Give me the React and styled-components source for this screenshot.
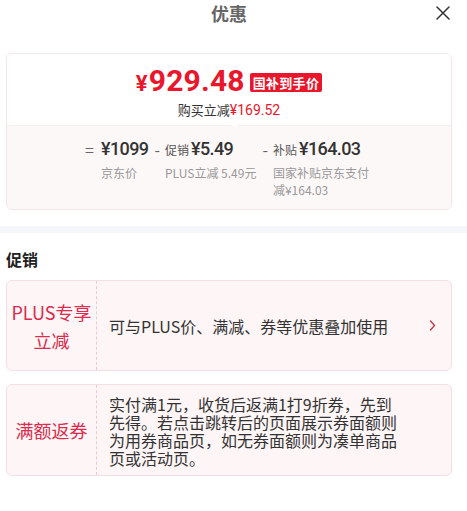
import React from "react";
import styled, { createGlobalStyle } from "styled-components";

const RED = "#e9162c";

const GlobalStyle = createGlobalStyle`
  html, body { margin: 0; padding: 0; background: #fff; }
  body { font-family: "Noto Sans CJK SC", "Noto Sans", sans-serif; color: #333; }
  * { box-sizing: border-box; }
`;

const Page = styled.div`
  width: 467px;
  min-height: 511px;
  background: #fff;
`;

const Section = styled.div`
  padding: 0 15px 0 6px;
`;

const Header = styled.header`
  display: grid;
  grid-template-columns: 1fr auto 1fr;
  align-items: center;
  height: 26px;
`;

const Title = styled.h1`
  grid-column: 2;
  margin: 0;
  font-size: 18px;
  line-height: 26px;
  font-weight: 700;
  color: #666;
`;

const CloseButton = styled.button`
  grid-column: 3;
  justify-self: end;
  margin-right: 1px;
  width: 16px;
  height: 16px;
  padding: 0;
  border: none;
  background: none;
  display: flex;
  align-items: center;
  justify-content: center;
`;

const PriceCard = styled.div`
  margin-top: 27px;
  border: 1px solid #f3e6e8;
  border-radius: 6px;
  overflow: hidden;
`;

const PriceTop = styled.div`
  position: relative;
  background: #fff;
  padding: 13px 0 6px;
  display: flex;
  flex-direction: column;
  align-items: center;
  border-bottom: 1px solid #f7ecec;
  &::after {
    content: "";
    position: absolute;
    left: 224px;
    bottom: -1px;
    border: 4px solid transparent;
    border-bottom: 3px solid #fff;
    border-top: none;
  }
`;

const PriceRow = styled.div`
  display: flex;
  align-items: center;
  height: 30px;
  gap: 5px;
`;

const BigPrice = styled.span`
  font-family: Roboto, "Noto Sans CJK SC", sans-serif;
  font-weight: 700;
  color: ${RED};
  font-size: 30px;
  line-height: 30px;
  letter-spacing: 0.2px;
  display: flex;
  align-items: baseline;
`;

const Yen = styled.span`
  font-size: ${(p) => p.$size || 20}px;
  margin-right: 1px;
`;

const Badge = styled.span`
  background: ${RED};
  color: #fff;
  font-size: 13px;
  font-weight: 700;
  line-height: 19px;
  height: 19px;
  padding: 0 3px;
  border-radius: 2px;
  letter-spacing: 0.3px;
`;

const SubLine = styled.div`
  margin-top: 4px;
  font-size: 13px;
  line-height: 18px;
  color: #333;
`;

const RedNum = styled.span`
  color: ${RED};
  font-family: Roboto, "Noto Sans CJK SC", sans-serif;
  font-size: 14px;
`;

const Breakdown = styled.div`
  background: #fdf8f8;
  padding: 11px 0 11px;
  display: flex;
  justify-content: center;
  gap: 6px;
`;

const Col = styled.div`
  display: flex;
  align-items: flex-start;
  gap: ${(p) => p.$gap || 5}px;
`;

const Op = styled.span`
  font-size: 16px;
  line-height: 24px;
  color: #666;
`;

const ColBody = styled.div`
  display: flex;
  flex-direction: column;
  max-width: 100px;
`;

const Amount = styled.div`
  display: flex;
  align-items: baseline;
  gap: 2px;
  height: 24px;
  line-height: 24px;
  white-space: nowrap;
`;

const AmountTag = styled.span`
  font-size: 12px;
  color: #555;
`;

const AmountNum = styled.span`
  font-family: Roboto, "Noto Sans CJK SC", sans-serif;
  font-size: 18px;
  font-weight: 500;
  color: #333;
  letter-spacing: -0.6px;
`;

const Desc = styled.div`
  margin-top: 3px;
  font-size: 12px;
  line-height: 17px;
  color: #999;
  white-space: ${(p) => (p.$nowrap ? "nowrap" : "normal")};
`;

const Band = styled.div`
  margin-top: 16px;
  height: 7px;
  background: #f4f6fa;
`;

const SectionTitle = styled.h2`
  margin: 15px 0 0;
  font-size: 16px;
  line-height: 22px;
  font-weight: 700;
  color: #222;
`;

const PromoCard = styled.div`
  margin-top: ${(p) => p.$mt}px;
  display: flex;
  min-height: ${(p) => p.$h}px;
  background: #fdf5f6;
  border: 1px solid #f5dfe3;
  border-radius: 6px;
`;

const PromoLabel = styled.div`
  width: 90px;
  flex-shrink: 0;
  border-right: 1px dashed #f0c9d0;
  display: flex;
  align-items: center;
  justify-content: center;
  text-align: center;
  font-size: 18px;
  line-height: 28px;
  color: #dc2b4c;
  padding: 0 2px;
`;

const PromoText = styled.div`
  flex: 1;
  display: flex;
  align-items: center;
  padding: ${(p) => p.$pad || "0"};
  padding-left: 12px;
  font-size: 16px;
  line-height: 18px;
  color: #333;
`;

const TextBox = styled.div`
  width: 290px;
`;

const ArrowSlot = styled.div`
  width: 54px;
  flex-shrink: 0;
  display: flex;
  align-items: center;
  justify-content: center;
  padding-left: 12px;
`;

const Chevron = () => (
  <svg width="7" height="11" viewBox="0 0 7 11" fill="none">
    <polyline points="1.5,1 5.5,5.5 1.5,10" stroke="#c63a52" strokeWidth="1.4" strokeLinecap="round" strokeLinejoin="round" />
  </svg>
);

const CloseIcon = () => (
  <svg width="14" height="14" viewBox="0 0 14 14">
    <path d="M1 1 L13 13 M13 1 L1 13" stroke="#333" strokeWidth="1.5" strokeLinecap="round" />
  </svg>
);

export default function App() {
  return (
    <Page>
      <GlobalStyle />
      <Section>
        <Header>
          <Title>优惠</Title>
          <CloseButton aria-label="关闭">
            <CloseIcon />
          </CloseButton>
        </Header>
        <PriceCard>
          <PriceTop>
            <PriceRow>
              <BigPrice>
                <Yen $size={22}>¥</Yen>929.48
              </BigPrice>
              <Badge>国补到手价</Badge>
            </PriceRow>
            <SubLine>
              购买立减<RedNum>¥169.52</RedNum>
            </SubLine>
          </PriceTop>
          <Breakdown>
            <Col $gap={7}>
              <Op>=</Op>
              <ColBody>
                <Amount>
                  <AmountNum>¥1099</AmountNum>
                </Amount>
                <Desc $nowrap>京东价</Desc>
              </ColBody>
            </Col>
            <Col>
              <Op>-</Op>
              <ColBody>
                <Amount>
                  <AmountTag>促销</AmountTag>
                  <AmountNum>¥5.49</AmountNum>
                </Amount>
                <Desc $nowrap>PLUS立减 5.49元</Desc>
              </ColBody>
            </Col>
            <Col>
              <Op>-</Op>
              <ColBody>
                <Amount>
                  <AmountTag>补贴</AmountTag>
                  <AmountNum>¥164.03</AmountNum>
                </Amount>
                <Desc>国家补贴京东支付减¥164.03</Desc>
              </ColBody>
            </Col>
          </Breakdown>
        </PriceCard>
      </Section>
      <Band />
      <Section>
        <SectionTitle>促销</SectionTitle>
        <PromoCard $mt={10} $h={91}>
          <PromoLabel>PLUS专享<br />立减</PromoLabel>
          <PromoText>
            <TextBox>可与PLUS价、满减、券等优惠叠加使用</TextBox>
          </PromoText>
          <ArrowSlot>
            <Chevron />
          </ArrowSlot>
        </PromoCard>
        <PromoCard $mt={13} $h={92}>
          <PromoLabel>满额返券</PromoLabel>
          <PromoText $pad="2px 0 0">
            <TextBox>
              实付满1元，收货后返满1打9折券，先到先得。若点击跳转后的页面展示券面额则为用券商品页，如无券面额则为凑单商品页或活动页。
            </TextBox>
          </PromoText>
          <ArrowSlot />
        </PromoCard>
      </Section>
    </Page>
  );
}
